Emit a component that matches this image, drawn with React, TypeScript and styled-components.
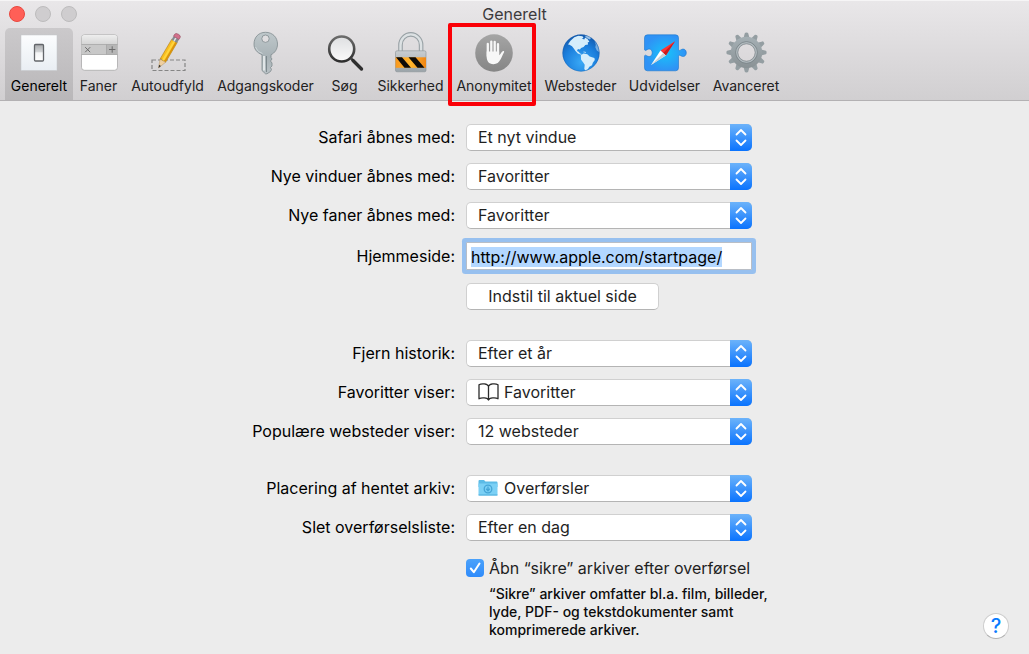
import React, { useEffect, useRef } from "react";
import styled, { createGlobalStyle, css } from "styled-components";

const GlobalStyle = createGlobalStyle`
  * { box-sizing: border-box; }
  html, body, #root { min-height: 100vh; }
  body {
    margin: 0;
    background: #ececec;
    color: #1a1a1a;
    font-family: Inter, Roboto, "Liberation Sans", sans-serif;
    font-size: 16px;
    font-weight: 400;
  }
`;

const Window = styled.div`
  min-height: 100vh;
  display: flex;
  flex-direction: column;
`;

const Header = styled.header`
  background: linear-gradient(#e9e7e9, #d1cfd1);
  border-top: 1px solid #f6f5f6;
  border-bottom: 1px solid #b3b1b3;
`;

const TitleBar = styled.div`
  display: grid;
  grid-template-columns: 1fr auto 1fr;
  align-items: center;
  height: 26px;
  padding: 0 9px;
`;

const Lights = styled.div`
  display: flex;
  gap: 10px;
`;

const Light = styled.button<{ $active?: boolean }>`
  width: 16px;
  height: 16px;
  padding: 0;
  border-radius: 50%;
  border: 1px solid ${(p) => (p.$active ? "#e9483f" : "#bdbcbd")};
  background: ${(p) => (p.$active ? "#ff5f57" : "#cfcdcf")};
`;

const Title = styled.h1`
  margin: 0;
  font-size: 16px;
  font-weight: 400;
  line-height: 20px;
  color: #3d3b3d;
`;

const Toolbar = styled.nav`
  display: flex;
  padding: 1px 0 0 5px;
`;

const Tab = styled.button<{ $width: number; $selected?: boolean }>`
  position: relative;
  flex: 0 0 ${(p) => p.$width}px;
  display: flex;
  flex-direction: column;
  align-items: center;
  gap: 1px;
  height: 72px;
  padding: 3px 0 0;
  border: 0;
  border-radius: 5px 5px 0 0;
  background: ${(p) => (p.$selected ? "linear-gradient(#cbc9cb, #b9b7b9)" : "none")};
  color: ${(p) => (p.$selected ? "#000" : "#222122")};
  font: inherit;
  font-size: 14px;
  line-height: 20px;
  white-space: nowrap;

  svg { display: block; width: 44px; height: 44px; flex: none; }
`;

const Highlight = styled.span`
  position: absolute;
  inset: -5px 0 -6px -4px;
  border: 4px solid #fb0007;
  border-radius: 2px;
  pointer-events: none;
`;

const Form = styled.form`
  display: flex;
  flex-direction: column;
  gap: 30px;
  padding-top: 23px;
`;

const Group = styled.div`
  display: flex;
  flex-direction: column;
  gap: 12px;
`;

const Row = styled.div<{ $tall?: boolean }>`
  display: grid;
  grid-template-columns: 455fr 563fr;
  column-gap: 11px;
  align-items: center;
  min-height: ${(p) => (p.$tall ? 30 : 27)}px;
`;

const Label = styled.label`
  text-align: right;
  line-height: 20px;
  padding-bottom: 1px;
  color: #000;
`;

const SelectBox = styled.div`
  position: relative;
  width: 286px;
  height: 27px;
`;

const surface = css`
  background: #fff;
  border: 1px solid #d0d0d0;
  border-bottom-color: #b4b4b4;
  border-radius: 5px;
`;

const Select = styled.select<{ $icon?: boolean }>`
  ${surface}
  appearance: none;
  width: 100%;
  height: 27px;
  padding: 0 28px 2px ${(p) => (p.$icon ? 37 : 11)}px;
  color: #1f1f1f;
  font: inherit;
  outline: 0;
`;

const Cap = styled.span`
  position: absolute;
  inset: 0 0 0 auto;
  width: 22px;
  border-radius: 0 5px 5px 0;
  background: linear-gradient(#6cb3fa, #0a73fe);
  pointer-events: none;
  svg { display: block; width: 22px; height: 27px; }
`;

const SelectIcon = styled.span`
  position: absolute;
  inset: 0 auto 2px 12px;
  display: flex;
  align-items: center;
  pointer-events: none;
`;

const UrlField = styled.input`
  width: 286px;
  height: 28px;
  padding: 1px 4px 0;
  border: 1px solid #b9bec6;
  background: #fff;
  box-shadow: 0 0 0 4px #97c0ef;
  border-radius: 1px;
  outline: 0;
  color: #000;
  font: inherit;
  line-height: 22px;
  &::selection { background: #b3d7ff; color: #000; }
`;

const PushButton = styled.button`
  ${surface}
  grid-column: 2;
  justify-self: start;
  width: 193px;
  height: 27px;
  padding: 0 0 2px;
  color: #1f1f1f;
  font: inherit;
`;

const Download = styled.div`
  display: flex;
  flex-direction: column;
  gap: 7px;
  margin-top: 5px;
`;

const CheckLine = styled.label`
  grid-column: 2;
  display: flex;
  align-items: center;
  gap: 5px;
  line-height: 20px;
  color: #1f1f1f;
`;

const CheckBox = styled.span`
  position: relative;
  width: 18px;
  height: 18px;
  svg { position: absolute; inset: 0; pointer-events: none; }
`;

const CheckInput = styled.input`
  appearance: none;
  display: block;
  width: 18px;
  height: 18px;
  margin: 0;
  border-radius: 4px;
  background: #c9c9c9;
  &:checked { background: linear-gradient(#4ba2fb, #2f8bfb); }
`;

const CheckRow = styled.div`
  display: grid;
  grid-template-columns: 455fr 563fr;
  column-gap: 11px;
`;

const Footer = styled.div`
  grid-column: 2;
  display: flex;
  justify-content: space-between;
  align-items: flex-end;
  padding: 0 20px 13px 23px;
`;

const Note = styled.p`
  margin: 0;
  width: 300px;
  font-size: 14px;
  font-weight: 500;
  line-height: 18px;
  color: #0c0c0c;
`;

const HelpButton = styled.button`
  width: 26px;
  height: 26px;
  padding: 0;
  border-radius: 50%;
  border: 1px solid #cdcdcd;
  border-bottom-color: #b2b2b2;
  background: #fff;
  color: #0a7bff;
  font: inherit;
  font-size: 20px;
  font-weight: 500;
  line-height: 24px;
`;

const GeneralIcon = () => (
  <svg viewBox="0 0 44 44">
    <defs>
      <linearGradient id="plate" x1="0" y1="0" x2="0" y2="1">
        <stop offset="0" stopColor="#fcfdfe" /><stop offset="1" stopColor="#e9eef3" />
      </linearGradient>
      <linearGradient id="rocker" x1="0" y1="0" x2="0" y2="1">
        <stop offset="0" stopColor="#a9abad" /><stop offset=".45" stopColor="#d4d6d8" />
        <stop offset=".5" stopColor="#f4f5f6" /><stop offset="1" stopColor="#fff" />
      </linearGradient>
    </defs>
    <rect x="4" y="4" width="36" height="35.5" fill="url(#plate)" stroke="#c3c6c9" strokeWidth=".5" />
    <rect x="17.5" y="13.5" width="9" height="16.5" rx="1" fill="url(#rocker)" stroke="#63666a" strokeWidth="1.3" />
  </svg>
);

const TabsIcon = () => (
  <svg viewBox="0 0 44 44">
    <defs>
      <linearGradient id="tabtop" x1="0" y1="0" x2="0" y2="1">
        <stop offset="0" stopColor="#eee" /><stop offset="1" stopColor="#d4d4d4" />
      </linearGradient>
    </defs>
    <rect x="4.5" y="3.8" width="36" height="35.5" rx="3" fill="#fff" stroke="#aaa" strokeWidth=".8" />
    <path d="M4.8 13.5V7a3 3 0 0 1 3-3h29.400a3 3 0 0 1 3 3v6.500z" fill="url(#tabtop)" />
    <path d="M4.500 13.500h36v10h-36z" fill="#c8c8c8" />
    <path d="M29.500 13.500h11v10h-11z" fill="#b6b6b6" />
    <path d="M4.500 13.500h36M4.500 23.500h36M29.500 13.500v10" stroke="#a4a4a4" strokeWidth=".8" />
    <path d="M8.200 16.200l5 5m0-5l-5 5M32 18.500h6.400M35.200 15.300v6.400" stroke="#6c6c6c" strokeWidth="1" />
  </svg>
);

const PencilIcon = () => (
  <svg viewBox="0 0 44 44">
    <rect x="6" y="29" width="33" height="10.500" fill="none" stroke="#858585" strokeWidth="1.200" strokeDasharray="4 2" />
    <g transform="translate(12.500 37) rotate(30.500)">
      <path d="M0 0L-3.200-8.500h6.400z" fill="#efcf9e" stroke="#ac8d60" strokeWidth=".4" />
      <path d="M0 0l-1.100-3h2.200z" fill="#333" />
      <path d="M-3.200-8.500v-23h6.400v23l-1.600-1-1.600 1-1.600-1z" fill="#f8bd20" stroke="#a87714" strokeWidth=".5" />
      <path d="M-1-9v-22h2v22z" fill="#ffd53c" />
      <path d="M1.400-9v-22h1.700v22z" fill="#d9930c" />
      <path d="M-3.200-35h6.400v4h-6.400z" fill="#868b8f" /><path d="M-1-35h1.500v4H-1z" fill="#dfe2e4" />
      <path d="M-3.200-35v-2.200q0-2 3.200-2t3.200 2v2.200z" fill="#d2708b" stroke="#8f4558" strokeWidth=".5" />
    </g>
  </svg>
);

const KeyIcon = () => (
  <svg viewBox="0 0 44 44">
    <defs>
      <linearGradient id="key" x1="0" y1="0" x2="0" y2="1">
        <stop offset="0" stopColor="#bfc8cb" /><stop offset=".6" stopColor="#a8b2b6" /><stop offset="1" stopColor="#b9c1c5" />
      </linearGradient>
    </defs>
    <path fillRule="evenodd" fill="url(#key)" stroke="#7f8a8e" strokeWidth=".8"
      d="M21.500 1.300c7 0 12 5 12 11.800 0 5.200-2.900 9-6.500 10.600v2.800l1 1.500-1.500 2 1.500 2v3l-1.500 1.500 1 2-1 2-3.500 2.300h-1.500l-3.500-3.300V23.700c-5-2-8-5.400-8-10.600 0-6.800 4.500-11.800 11.500-11.800zM21.500 4a3.700 3.700 0 1 0 0 7.400 3.700 3.700 0 0 0 0-7.400z" />
    <path d="M20 25v14.500" stroke="#eef2f3" strokeWidth="1.600" /><path d="M22.500 25v16" stroke="#778287" strokeWidth=".9" />
    <path d="M11.500 16a10 10 0 0 0 7 6.500" stroke="#cdd5d8" fill="none" />
  </svg>
);

const SearchIcon = () => (
  <svg viewBox="0 0 44 44">
    <defs>
      <linearGradient id="lens" x1="0" y1="0" x2="0" y2="1">
        <stop offset="0" stopColor="#dedfe1" /><stop offset="1" stopColor="#fafafa" />
      </linearGradient>
      <linearGradient id="rim" x1="0" y1="0" x2="0" y2="1">
        <stop offset="0" stopColor="#6b6b6b" /><stop offset="1" stopColor="#2e2e2e" />
      </linearGradient>
    </defs>
    <circle cx="18.700" cy="18" r="12.500" fill="url(#lens)" stroke="url(#rim)" strokeWidth="2.600" />
    <path d="M27.800 27.200l3.200 3.200" stroke="#444" strokeWidth="2.500" />
    <path d="M30 29.500l8.500 8.500" stroke="#2f2f2f" strokeWidth="3.400" strokeLinecap="round" />
  </svg>
);

const LockIcon = () => (
  <svg viewBox="0 0 44 44">
    <defs>
      <linearGradient id="body" x1="0" y1="0" x2="0" y2="1">
        <stop offset="0" stopColor="#c9ced1" /><stop offset="1" stopColor="#9ba4a9" />
      </linearGradient>
      <linearGradient id="orange" x1="0" y1="0" x2="1" y2="0">
        <stop offset="0" stopColor="#f8981d" /><stop offset=".5" stopColor="#ffb52c" /><stop offset="1" stopColor="#f18512" />
      </linearGradient>
    </defs>
    <path d="M11.500 21v-7a10.300 10.600 0 0 1 20.600 0v7" fill="none" stroke="#98a1a5" strokeWidth="4.600" />
    <path d="M11.500 21v-7a10.300 10.600 0 0 1 20.600 0v7" fill="none" stroke="#dce1e3" strokeWidth="2.400" />
    <rect x="6.500" y="19.800" width="30.500" height="21" rx="1.500" fill="url(#body)" stroke="#8a9296" strokeWidth=".6" />
    <path d="M6.500 26.300h30.500v10.500H6.500z" fill="url(#orange)" />
    <path d="M7 26.300h6l9 10.500h-6.500zM19.500 26.300h7l9 10.500h-7z" fill="#0d0b08" />
  </svg>
);

const HandIcon = () => (
  <svg viewBox="0 0 44 44">
    <defs>
      <linearGradient id="disc" x1="0" y1="0" x2="0" y2="1">
        <stop offset="0" stopColor="#a5a5a5" /><stop offset="1" stopColor="#858585" />
      </linearGradient>
    </defs>
    <circle cx="22" cy="22" r="18.800" fill="url(#disc)" />
    <path d="M15.800 13v12M19.300 10.600V23M22.700 10.800V23M26 13.200V25" stroke="#f7f7f7" strokeWidth="2.300" strokeLinecap="round" />
    <path d="M14.650 20.500h12.500v3.700c1.300-.6 1.800-3 3.500-4 1-.6 2 .1 1.300 1.200-1.200 1.800-2 4.500-3.300 6.900-1.700 3.200-3.700 4.900-7.200 4.900-4.800 0-6.800-3.400-6.800-7.700z" fill="#f7f7f7" />
  </svg>
);

const GlobeIcon = () => (
  <svg viewBox="0 0 44 44">
    <defs>
      <radialGradient id="sea" cx=".5" cy=".75" r=".75">
        <stop offset="0" stopColor="#39a8f5" /><stop offset=".6" stopColor="#1b7fdd" /><stop offset="1" stopColor="#1359ad" />
      </radialGradient>
    </defs>
    <circle cx="22" cy="22" r="18.500" fill="url(#sea)" />
    <g fill="#d5edfb">
      <path d="M9 13.500l2.500-3.800 3.800-3.400 4-1.500 4.200.4 1 1.700-1.800.7 2.600 1 .8-2.200 2.600 1.800 1.700 2.500-1.700.7.400 2-2.800.7-1.700 2-2.500.8-1.200 1.600-2-.4-.9 1.800 1.700.8 1.300 1.700 1.700.7-.6.7-3.300-1.300-2.300-2.500-1.700-2.500-1.800-2.200-2.500-1.500z" />
      <path d="M21.800 24.200l2.700-1.600 3.800.7 2.400 2.100 4.700 1.600.4 2-2 2.700-.8 2.500-2.700 1.500-1.500 2.500-2.400 1.200-1.100-1.400.4-4.300-1.300-2-2.300-2.900z" />
      <path d="M35.500 10.200l2.700 3 1.600 4.700.2 3-2.200-1.400-1.500-3.300.5-2.500z" opacity=".5" />
      <path d="M25.500 4.500l4 .8 2.500 1.500-1 1.700-3-1.200z" opacity=".7" />
      <path d="M24.500 20.500l2.500.5v.7l-2.500-.5z" />
    </g>
    <circle cx="22" cy="22" r="18.200" fill="none" stroke="#1558a5" strokeWidth=".6" opacity=".6" />
  </svg>
);

const PuzzleIcon = () => (
  <svg viewBox="0 0 44 44">
    <defs>
      <radialGradient id="piece">
        <stop offset="0" stopColor="#18c3fa" /><stop offset="1" stopColor="#2f92f5" />
      </radialGradient>
    </defs>
    <path fill="url(#piece)" stroke="#1976cc" strokeWidth=".6"
      d="M4.500 3.800h28a3 3 0 0 1 3 3v11.500c0 1.300 1 1.500 2.200.6 3-2 5.600 0 5.600 2.900s-2.600 4.900-5.600 2.900c-1.200-.9-2.200-.7-2.200.6V36.800a3 3 0 0 1-3 3h-28a3 3 0 0 1-3-3V25.300c0-1.300 1-1.500 2.200-.6 3 2 5.500 0 5.500-2.900s-2.500-4.900-5.500-2.900c-1.200.9-2.200.7-2.200-.6V6.800a3 3 0 0 1 3-3z" />
    <path d="M32 10.200L17.500 19.500l5.300 5z" fill="#f33" /><path d="M32 10.200L20.200 22l2.600 2.500z" fill="#c91d1d" />
    <path d="M8 34l9.500-14.500 5.300 5z" fill="#fff" /><path d="M8 34l12.200-12 2.600 2.500z" fill="#c9d0d4" />
  </svg>
);

const teeth = Array.from({ length: 12 }, (_, i) => i * 30);

const GearIcon = () => (
  <svg viewBox="0 0 44 44">
    <defs>
      <linearGradient id="steel" gradientUnits="userSpaceOnUse" x1="0" y1="-20" x2="0" y2="20">
        <stop offset="0" stopColor="#a9b4b9" /><stop offset="1" stopColor="#858d90" />
      </linearGradient>
    </defs>
    <g transform="translate(22.500 21.500)">
      {teeth.map((a) => (
        <path key={a} d="M-3-14.500l1.300-4.800q.2-.8 1.700-.8t1.700.8L3-14.500z" fill="#949ea2" transform={`rotate(${a})`} />
      ))}
      <circle r="12.200" fill="none" stroke="url(#steel)" strokeWidth="7" />
      <circle r="10.800" fill="none" stroke="#7d878b" strokeWidth="1" />
      <circle r="9.600" fill="none" stroke="#b3bcc0" strokeWidth="1.400" />
      <circle r="8.700" fill="none" stroke="#7b8488" strokeWidth=".7" />
    </g>
  </svg>
);

const BookIcon = () => (
  <svg width="21" height="18" viewBox="0 0 21 18" fill="none" stroke="#2b2b2b" strokeWidth="1.300" strokeLinejoin="round">
    <path d="M10.500 3.200C9.500.6 3.500.2 1 1.800v14c2.500-1.400 8.500-1.200 9.500 1.200 1-2.400 7-2.600 9.500-1.200v-14C17.500.2 11.500.6 10.500 3.200zV16.500" />
  </svg>
);

const FolderIcon = () => (
  <svg width="20" height="18" viewBox="0 0 20 18">
    <path d="M.5 2q0-1 1-1h4.500l1.500 1.500h11q1 0 1 1V8H.5z" fill="#5cbbe6" />
    <path d="M.5 4.500h19v11.300q0 .7-.8.700H1.300q-.8 0-.8-.7z" fill="#7bd0f5" />
    <path d="M.5 16h19" stroke="#4faedb" strokeWidth="1" />
    <circle cx="10" cy="10" r="3.800" fill="none" stroke="#45a5d6" strokeWidth="1.300" />
    <path d="M10 7.500v4M8.200 9.800l1.800 1.900 1.800-1.900" fill="none" stroke="#45a5d6" strokeWidth="1.300" />
  </svg>
);

const tabs = [
  { label: "Generelt", width: 68, Icon: GeneralIcon, selected: true },
  { label: "Faner", width: 51, Icon: TabsIcon },
  { label: "Autoudfyld", width: 87, Icon: PencilIcon },
  { label: "Adgangskoder", width: 109, Icon: KeyIcon },
  { label: "Søg", width: 49, Icon: SearchIcon },
  { label: "Sikkerhed", width: 83, Icon: LockIcon },
  { label: "Anonymitet", width: 84, Icon: HandIcon, marked: true },
  { label: "Websteder", width: 89, Icon: GlobeIcon },
  { label: "Udvidelser", width: 79, Icon: PuzzleIcon },
  { label: "Avanceret", width: 84, Icon: GearIcon },
];

type SelectRowProps = { id: string; label: string; value: string; icon?: React.ReactNode };

const SelectRow = ({ id, label, value, icon }: SelectRowProps) => (
  <Row>
    <Label htmlFor={id}>{label}</Label>
    <SelectBox>
      <Select id={id} $icon={!!icon}>
        <option>{value}</option>
      </Select>
      {icon && <SelectIcon>{icon}</SelectIcon>}
      <Cap>
        <svg viewBox="0 0 22 27" fill="none" stroke="#fff" strokeWidth="1.800" strokeLinecap="round" strokeLinejoin="round">
          <path d="M6.500 10.500L11 6l4.500 4.500M6.500 16.500L11 21l4.500-4.500" />
        </svg>
      </Cap>
    </SelectBox>
  </Row>
);

export default function App() {
  const url = useRef<HTMLInputElement>(null);

  useEffect(() => {
    url.current?.focus();
    url.current?.select();
  }, []);

  return (
    <Window>
      <GlobalStyle />
      <Header>
        <TitleBar>
          <Lights>
            <Light $active aria-label="Luk" />
            <Light aria-label="Minimer" />
            <Light aria-label="Zoom" />
          </Lights>
          <Title>Generelt</Title>
        </TitleBar>
        <Toolbar>
          {tabs.map(({ label, width, Icon, selected, marked }) => (
            <Tab key={label} type="button" $width={width} $selected={selected}>
              <Icon />
              {label}
              {marked && <Highlight />}
            </Tab>
          ))}
        </Toolbar>
      </Header>
      <Form onSubmit={(e) => e.preventDefault()}>
        <Group>
          <SelectRow id="open" label="Safari åbnes med:" value="Et nyt vindue" />
          <SelectRow id="windows" label="Nye vinduer åbnes med:" value="Favoritter" />
          <SelectRow id="newtabs" label="Nye faner åbnes med:" value="Favoritter" />
          <Row $tall>
            <Label htmlFor="home">Hjemmeside:</Label>
            <UrlField id="home" ref={url} type="text" spellCheck={false} defaultValue="http://www.apple.com/startpage/" />
          </Row>
          <Row>
            <PushButton type="button">Indstil til aktuel side</PushButton>
          </Row>
        </Group>
        <Group>
          <SelectRow id="history" label="Fjern historik:" value="Efter et år" />
          <SelectRow id="favorites" label="Favoritter viser:" value="Favoritter" icon={<BookIcon />} />
          <SelectRow id="top" label="Populære websteder viser:" value="12 websteder" />
        </Group>
        <Group>
          <SelectRow id="location" label="Placering af hentet arkiv:" value="Overførsler" icon={<FolderIcon />} />
          <SelectRow id="clear" label="Slet overførselsliste:" value="Efter en dag" />
          <Download>
            <CheckRow>
              <CheckLine>
                <CheckBox>
                  <CheckInput type="checkbox" defaultChecked />
                  <svg width="18" height="18" viewBox="0 0 18 18" fill="none" stroke="#fff" strokeWidth="2" strokeLinecap="round" strokeLinejoin="round">
                    <path d="M4.800 9.500l3 3.700 5.700-8.700" />
                  </svg>
                </CheckBox>
                Åbn “sikre” arkiver efter overførsel
              </CheckLine>
            </CheckRow>
            <CheckRow>
              <Footer>
                <Note>“Sikre” arkiver omfatter bl.a. film, billeder, lyde, PDF- og tekstdokumenter samt komprimerede arkiver.</Note>
                <HelpButton type="button" aria-label="Hjælp">?</HelpButton>
              </Footer>
            </CheckRow>
          </Download>
        </Group>
      </Form>
    </Window>
  );
}
